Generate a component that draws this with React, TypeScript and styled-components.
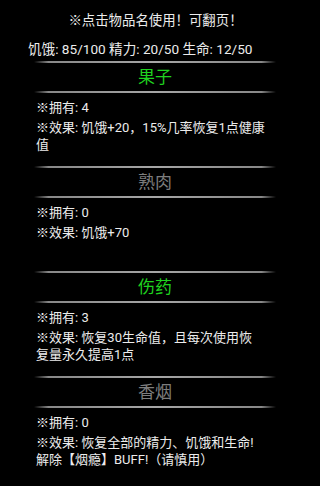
import React from "react";
import styled, { createGlobalStyle } from "styled-components";

const Global = createGlobalStyle`
  html, body {
    margin: 0;
    padding: 0;
    background: #000;
  }
  body {
    font-family: Roboto, "Noto Sans CJK SC", "Noto Sans", sans-serif;
    color: #ececec;
  }
`;

const Page = styled.div`
  width: 311px;
  height: 486px;
  background: #000;
  overflow: hidden;
  padding-top: 11px;
  box-sizing: border-box;
`;

const Hint = styled.div`
  font-size: 13.4px;
  line-height: 20px;
  text-align: center;
  color: #ececec;
`;

const Stats = styled.div`
  font-size: 13.6px;
  line-height: 20px;
  margin-top: 8px;
  padding-left: 28px;
  color: #ececec;
  white-space: pre;
`;

const List = styled.div`
  margin: 2px 35px 0 34px;
  display: flex;
  flex-direction: column;
`;

const Item = styled.div`
  height: 105px;
  display: flex;
  flex-direction: column;
`;

const Divider = styled.div`
  height: 2px;
  background: linear-gradient(
    to right,
    rgba(150, 150, 150, 0) 0%,
    rgba(150, 150, 150, 0.9) 6%,
    #a6a6a6 50%,
    rgba(150, 150, 150, 0.9) 94%,
    rgba(150, 150, 150, 0) 100%
  );
`;

const Title = styled.div<{ $active: boolean }>`
  height: 28px;
  line-height: 28px;
  font-size: 17px;
  text-align: center;
  color: ${(p) => (p.$active ? "#1fd21f" : "#7d7d7d")};
`;

const Owned = styled.div`
  margin-top: 5px;
  padding-left: 2px;
  font-size: 13px;
  line-height: 20px;
`;

const Effect = styled.div`
  margin-top: 1px;
  padding-left: 2px;
  font-size: 13px;
  line-height: 17px;
  white-space: pre-line;
`;

type Good = { name: string; count: number; effect: string };

const goods: Good[] = [
  { name: "果子", count: 4, effect: "※效果: 饥饿+20，15%几率恢复1点健康\n值" },
  { name: "熟肉", count: 0, effect: "※效果: 饥饿+70" },
  { name: "伤药", count: 3, effect: "※效果: 恢复30生命值，且每次使用恢\n复量永久提高1点" },
  { name: "香烟", count: 0, effect: "※效果: 恢复全部的精力、饥饿和生命!\n解除【烟瘾】BUFF!（请慎用）" },
];

export default function App() {
  return (
    <Page>
      <Global />
      <Hint>※点击物品名使用！可翻页！</Hint>
      <Stats>饥饿: 85/100 精力: 20/50 生命: 12/50</Stats>
      <List>
        {goods.map((g) => (
          <Item key={g.name}>
            <Divider />
            <Title $active={g.count > 0}>{g.name}</Title>
            <Divider />
            <Owned>※拥有: {g.count}</Owned>
            <Effect>{g.effect}</Effect>
          </Item>
        ))}
      </List>
    </Page>
  );
}
